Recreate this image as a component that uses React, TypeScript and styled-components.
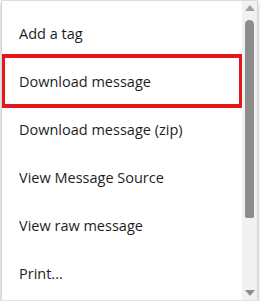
import styled, { createGlobalStyle } from "styled-components";

const Global = createGlobalStyle`
  html, body { margin: 0; padding: 0; background: #ffffff; }
  body { font-family: "Open Sans", "Noto Sans", sans-serif; }
`;

const Menu = styled.div`
  margin-left: 1px;
  width: 257px;
  height: 301px;
  display: flex;
  background: #ffffff;
  border-top: 1px solid #dcdcdc;
  border-left: 1px solid #d6d6d6;
  border-right: 1px solid #d6d6d6;
  border-bottom: 1px solid #e4e4e4;
  box-shadow: 0 3px 4px rgba(0, 0, 0, 0.28);
  box-sizing: border-box;
  overflow: hidden;
`;

const List = styled.ul`
  flex: 1;
  list-style: none;
  margin: 0;
  padding: 8px 2px 0 2px;
  overflow: hidden;
`;

const Item = styled.li<{ $active?: boolean }>`
  height: 48px;
  display: flex;
  align-items: center;
  padding-left: 15px;
  box-sizing: border-box;
  font-size: 14.5px;
  color: #1e1e1e;
  white-space: nowrap;
  outline: ${(p) => (p.$active ? "4px solid #e3171c" : "none")};
  outline-offset: -1px;
`;

const Scrollbar = styled.div`
  width: 15px;
  display: flex;
  flex-direction: column;
  align-items: center;
  background: #f1f1f1;
  padding: 4px 0 4px;
  box-sizing: border-box;
`;

const Arrow = styled.div<{ $down?: boolean }>`
  width: 0;
  height: 0;
  border-left: 5px solid transparent;
  border-right: 5px solid transparent;
  ${(p) =>
    p.$down
      ? "border-top: 6px solid #8d8d8d; margin-top: auto;"
      : "border-bottom: 6px solid #a0a0a0;"}
`;

const Thumb = styled.div`
  width: 9px;
  height: 198px;
  margin-top: 9px;
  border-radius: 5px 5px 2px 2px;
  background: #8c8c8c;
`;

const items = [
  "Add a tag",
  "Download message",
  "Download message (zip)",
  "View Message Source",
  "View raw message",
  "Print...",
];

export default function App() {
  return (
    <>
      <Global />
      <Menu>
        <List>
          {items.map((label, i) => (
            <Item key={label} $active={i === 1}>
              {label}
            </Item>
          ))}
        </List>
        <Scrollbar>
          <Arrow />
          <Thumb />
          <Arrow $down />
        </Scrollbar>
      </Menu>
    </>
  );
}
